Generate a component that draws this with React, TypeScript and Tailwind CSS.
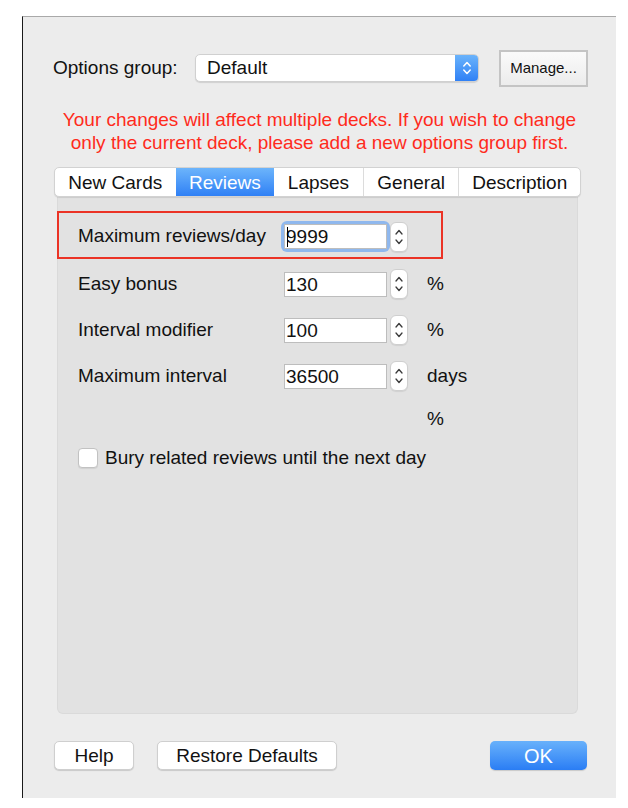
import React from "react";

const font = { fontFamily: '"Liberation Sans", Arial, sans-serif' };

function Stepper() {
  return (
    <div className="w-[18px] h-[30px] bg-white rounded-[6px] border border-[#cfcfcf] shadow-[0_1px_1px_rgba(0,0,0,0.08)] flex items-center justify-center">
      <svg width="10" height="22" viewBox="0 0 10 22">
        <path d="M2 8 L5 4.5 L8 8" fill="none" stroke="#3a3a3a" strokeWidth="1.3" strokeLinecap="round" strokeLinejoin="round" />
        <path d="M2 14 L5 17.5 L8 14" fill="none" stroke="#3a3a3a" strokeWidth="1.3" strokeLinecap="round" strokeLinejoin="round" />
      </svg>
    </div>
  );
}

function Row({ label, value, unit, focus }: { label: string; value: string; unit?: string; focus?: boolean }) {
  return (
    <div className="flex items-center h-full">
      <div className="w-[206px] whitespace-nowrap">{label}</div>
      <div className={focus ? "rounded-[3px] ring-[3px] ring-[#8fb8ee]" : ""}>
        <div className="w-[103px] h-[25px] bg-white border border-[#bdbdbd] flex items-center pl-[1px] leading-none relative">
          {focus && <span className="inline-block w-[1px] h-[20px] bg-black absolute left-[2px] top-[2px]" />}
          <span>{value}</span>
        </div>
      </div>
      <div className="ml-[3px]">
        <Stepper />
      </div>
      {unit && <div className="ml-[19px]">{unit}</div>}
    </div>
  );
}

export default function App() {
  const tabs = [
    { t: "New Cards", w: 121 },
    { t: "Reviews", w: 99, active: true },
    { t: "Lapses", w: 89 },
    { t: "General", w: 96 },
    { t: "Description", w: 122 },
  ];
  return (
    <div className="w-[628px] h-[808px] bg-white pt-[16px] pl-[22px] text-[#111] text-[19px]" style={font}>
      <div className="w-[594px] h-[782px] bg-[#ececec] border-l border-l-[#1a1a1a] border-t border-t-[#a9a9a9] flex flex-col">
        {/* Options group row */}
        <div className="mt-[32px] ml-[30px] flex items-center h-[38px]">
          <div className="w-[142px] whitespace-nowrap">Options group:</div>
          <div className="w-[284px] h-[28px] bg-white rounded-[5px] border border-[#d0d0d0] shadow-[0_1px_1px_rgba(0,0,0,0.12)] flex items-center overflow-hidden">
            <div className="flex-1 pl-[11px]">Default</div>
            <div className="w-[23px] h-full bg-gradient-to-b from-[#6ab3fb] to-[#2f80f5] flex items-center justify-center">
              <svg width="10" height="20" viewBox="0 0 10 20">
                <path d="M1.8 8 L5 4.5 L8.2 8" fill="none" stroke="#fff" strokeWidth="1.5" strokeLinecap="round" strokeLinejoin="round" />
                <path d="M1.8 12 L5 15.5 L8.2 12" fill="none" stroke="#fff" strokeWidth="1.5" strokeLinecap="round" strokeLinejoin="round" />
              </svg>
            </div>
          </div>
          <div className="ml-[20px] w-[89px] h-[37px] border-2 border-[#c4c4c4] bg-gradient-to-b from-[#fafafa] to-[#ececec] flex items-center justify-center text-[15px]">
            Manage...
          </div>
        </div>

        {/* Warning */}
        <div className="mt-[21px] text-center text-[#ff2b1c] leading-[23px] text-[19px]">
          <div>Your changes will affect multiple decks. If you wish to change</div>
          <div>only the current deck, please add a new options group first.</div>
        </div>

        {/* Tabs */}
        <div className="mt-[13px] ml-[31px] w-[527px] h-[30px] flex bg-white rounded-[5px] border border-[#d2d2d2] shadow-[0_1px_1px_rgba(0,0,0,0.1)] overflow-hidden relative z-10">
          {tabs.map((tab, i) => (
            <div
              key={tab.t}
              className={
                tab.active
                  ? "h-full pt-[2px] flex items-center justify-center bg-gradient-to-b from-[#6cb4fb] to-[#2f80f5] text-white"
                  : "h-full pt-[2px] flex items-center justify-center " + (i > 0 && !tabs[i - 1].active ? "border-l border-l-[#dcdcdc]" : "")
              }
              style={{ width: tab.w }}
            >
              {tab.t}
            </div>
          ))}
        </div>

        {/* Panel */}
        <div className="ml-[34px] w-[521px] h-[518px] bg-[#e2e2e2] rounded-b-[6px] border border-t-0 border-[#dadada] flex flex-col -mt-[1px]">
          <div className="mt-[15px] w-[386px] h-[48px] border-2 border-[#eb3325] pl-[19px] pt-[3px] -ml-[1px]">
            <Row label="Maximum reviews/day" value="9999" focus />
          </div>
          <div className="pl-[20px] mt-[2px]">
            <div className="h-[46px]">
              <Row label="Easy bonus" value="130" unit="%" />
            </div>
            <div className="h-[46px]">
              <Row label="Interval modifier" value="100" unit="%" />
            </div>
            <div className="h-[46px]">
              <Row label="Maximum interval" value="36500" unit="days" />
            </div>
            <div className="h-[40px] flex items-center">
              <div className="ml-[349px]">%</div>
            </div>
            <div className="h-[38px] flex items-center">
              <div className="w-[20px] h-[20px] bg-white rounded-[4px] border border-[#c2c2c2] shadow-[0_1px_1px_rgba(0,0,0,0.08)]" />
              <div className="ml-[7px]">Bury related reviews until the next day</div>
            </div>
          </div>
        </div>

        {/* Bottom buttons */}
        <div className="mt-[27px] ml-[31px] flex items-center">
          <div className="w-[80px] h-[29px] pt-[1px] bg-white rounded-[5px] border border-[#cfcfcf] shadow-[0_1px_1px_rgba(0,0,0,0.15)] flex items-center justify-center">
            Help
          </div>
          <div className="ml-[23px] w-[180px] h-[29px] pt-[1px] bg-white rounded-[5px] border border-[#cfcfcf] shadow-[0_1px_1px_rgba(0,0,0,0.15)] flex items-center justify-center">
            Restore Defaults
          </div>
          <div className="ml-[153px] w-[97px] h-[29px] pt-[1px] rounded-[5px] bg-gradient-to-b from-[#68b1fb] to-[#2a7df4] shadow-[0_1px_1px_rgba(0,0,0,0.15)] flex items-center justify-center text-white text-[20px]">
            OK
          </div>
        </div>
      </div>
    </div>
  );
}
